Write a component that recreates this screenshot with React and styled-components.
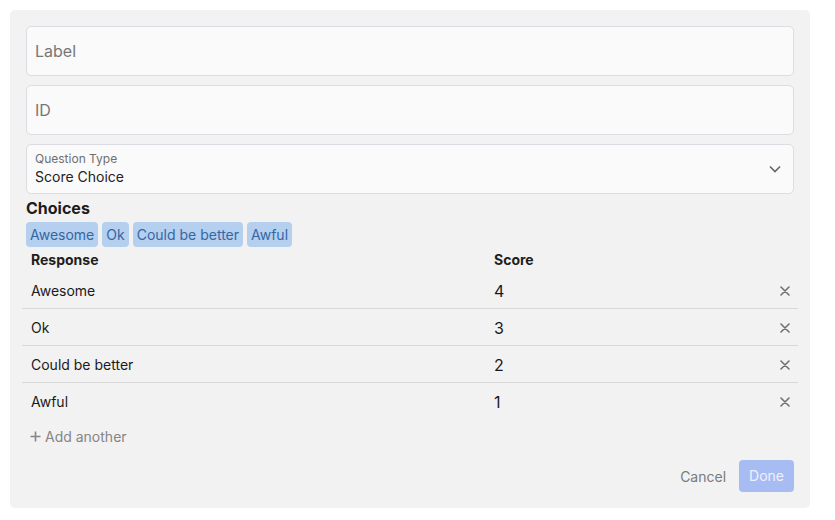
import React from "react";
import styled, { createGlobalStyle } from "styled-components";

const GlobalStyle = createGlobalStyle`
  body {
    margin: 0;
    background: #ffffff;
    font-family: Inter, "Liberation Sans", sans-serif;
  }
`;

const Panel = styled.div`
  margin: 10px;
  width: 800px;
  height: 498px;
  box-sizing: border-box;
  padding: 16px;
  background: #f2f2f2;
  border-radius: 5px;
  display: flex;
  flex-direction: column;
`;

const Field = styled.div`
  height: 50px;
  box-sizing: border-box;
  margin-bottom: 9px;
  border: 1px solid #dcdce2;
  border-radius: 5px;
  background: #fafafa;
  display: flex;
  align-items: center;
  padding: 0 8px;
  font-size: 16px;
  color: #777777;
`;

const SelectField = styled(Field)`
  margin-bottom: 0;
  justify-content: space-between;
  padding-right: 12px;
`;

const SelectText = styled.div`
  display: flex;
  flex-direction: column;
`;

const SmallLabel = styled.span`
  font-size: 12px;
  line-height: 16px;
  color: #6f6f6f;
`;

const SelectValue = styled.span`
  font-size: 14px;
  line-height: 20px;
  color: #222222;
`;

const Heading = styled.div`
  margin-top: 4px;
  font-size: 16px;
  line-height: 20px;
  font-weight: 700;
  color: #1c1c1c;
`;

const Chips = styled.div`
  display: flex;
  gap: 4px;
  margin-top: 4px;
`;

const Chip = styled.span`
  height: 25px;
  padding: 0 4px;
  border-radius: 4px;
  background: #b5cfee;
  color: #3466a6;
  font-size: 14px;
  line-height: 25px;
`;

const Table = styled.div`
  margin: 0 -4px;
`;

const Row = styled.div`
  display: grid;
  grid-template-columns: 463px 1fr 26px;
  align-items: center;
  height: ${(p) => (p.$head ? "25px" : "37px")};
  box-sizing: border-box;
  border-bottom: ${(p) => (p.$line ? "1px solid #d8d8d8" : "none")};
  padding-top: ${(p) => (p.$line ? "1px" : "0")};
`;

const HeadCell = styled.div`
  padding-left: 9px;
  font-size: 14px;
  font-weight: 700;
  color: #1e1e1e;
`;

const Cell = styled.div`
  padding-left: 9px;
  font-size: ${(p) => (p.$score ? "16px" : "14px")};
  color: #1a1a1a;
`;

const RemoveBtn = styled.div`
  display: flex;
  justify-content: center;
  align-items: center;
`;

const AddLink = styled.div`
  margin-top: 6px;
  margin-left: 4px;
  height: 20px;
  display: flex;
  align-items: center;
  gap: 4px;
  font-size: 14px;
  color: #858585;
`;

const Footer = styled.div`
  margin-top: auto;
  display: flex;
  justify-content: flex-end;
  align-items: center;
  gap: 13px;
`;

const CancelBtn = styled.span`
  font-size: 14px;
  color: #7a7a7a;
`;

const DoneBtn = styled.span`
  height: 32px;
  padding: 0 10px;
  border-radius: 4px;
  background: #a8bcf4;
  color: #eef1fd;
  font-size: 14px;
  line-height: 32px;
`;

const rows = [
  ["Awesome", 4],
  ["Ok", 3],
  ["Could be better", 2],
  ["Awful", 1],
];

const XIcon = () => (
  <svg width="10" height="10" viewBox="0 0 10 10">
    <path d="M1 1L9 9M9 1L1 9" stroke="#707070" strokeWidth="1.6" strokeLinecap="round" />
  </svg>
);

const App = () => {
  return (
    <>
      <GlobalStyle />
      <Panel>
        <Field>Label</Field>
        <Field>ID</Field>
        <SelectField>
          <SelectText>
            <SmallLabel>Question Type</SmallLabel>
            <SelectValue>Score Choice</SelectValue>
          </SelectText>
          <svg width="12" height="8" viewBox="0 0 12 8">
            <path d="M1 1.5L6 6.5L11 1.5" stroke="#666" strokeWidth="1.6" fill="none" />
          </svg>
        </SelectField>
        <Heading>Choices</Heading>
        <Chips>
          {rows.map(([name]) => (
            <Chip key={name}>{name}</Chip>
          ))}
        </Chips>
        <Table>
          <Row $head>
            <HeadCell>Response</HeadCell>
            <HeadCell>Score</HeadCell>
            <span />
          </Row>
          {rows.map(([name, score], i) => (
            <Row key={name} $line={i < rows.length - 1}>
              <Cell>{name}</Cell>
              <Cell $score>{score}</Cell>
              <RemoveBtn>
                <XIcon />
              </RemoveBtn>
            </Row>
          ))}
        </Table>
        <AddLink>
          <svg width="11" height="11" viewBox="0 0 11 11">
            <path d="M5.5 0.5V10.5M0.5 5.5H10.5" stroke="#858585" strokeWidth="1.6" />
          </svg>
          Add another
        </AddLink>
        <Footer>
          <CancelBtn>Cancel</CancelBtn>
          <DoneBtn>Done</DoneBtn>
        </Footer>
      </Panel>
    </>
  );
};

export default App;
